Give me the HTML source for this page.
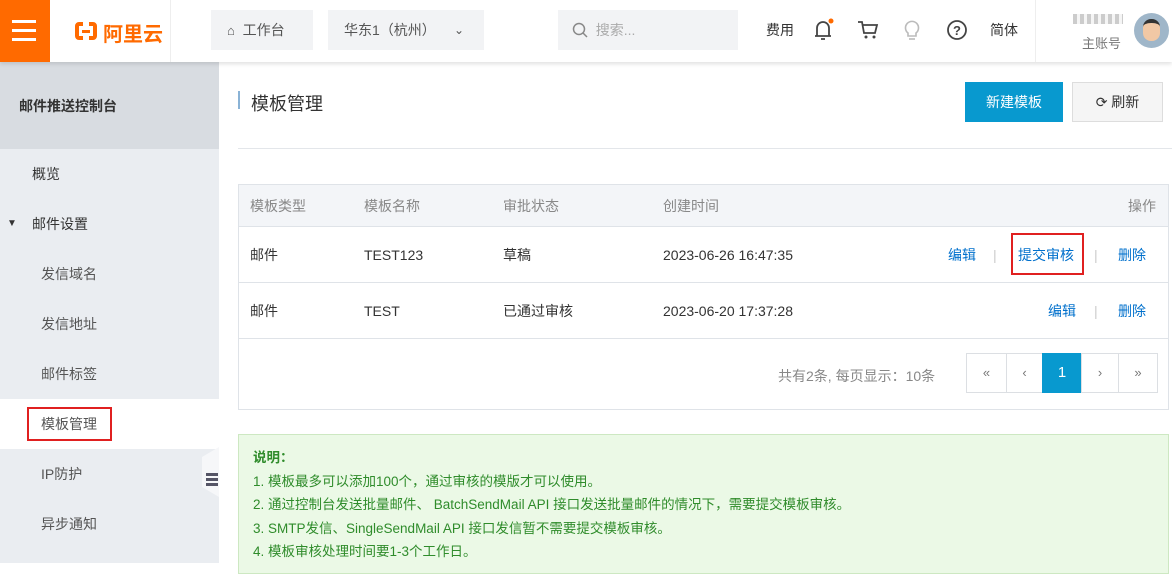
<!DOCTYPE html>
<html><head><meta charset="utf-8"><style>
*{margin:0;padding:0;box-sizing:border-box}
body{width:1172px;height:563px;overflow:hidden;background:#fff;font-family:"Liberation Sans","Noto Sans CJK SC",sans-serif;font-size:14px;color:#333;position:relative}
.a{position:absolute}
.top{left:0;top:0;width:1172px;height:62px;background:#fff;box-shadow:0 2px 4px rgba(0,0,0,.12);z-index:5}
.btn{background:#f2f3f5;height:40px;top:10px;color:#555;font-size:14px;line-height:40px}
.side{left:0;top:62px;width:219px;height:501px;background:#eaedf1}
.si{left:0;width:219px;height:50px;line-height:50px;font-size:14px;color:#333}
.tbl{left:238px;top:184px;width:931px;height:226px;border:1px solid #dfe3e8}
.row{left:0;width:929px;border-bottom:1px solid #dfe3e8}
.c{top:0;height:100%;display:flex;align-items:center;font-size:14px}
.lk{color:#0070cc}
.sep{color:#ccc}
.pg{top:353px;height:40px;border:1px solid #dcdfe3;width:54px;text-align:center;line-height:38px;color:#777;font-size:13px}
</style></head><body>
<div class="a top">
  <div class="a" style="left:0;top:0;width:50px;height:62px;background:#ff6a00">
    <div class="a" style="left:12px;top:20px;width:24px;height:3px;background:#fff"></div>
    <div class="a" style="left:12px;top:29px;width:24px;height:3px;background:#fff"></div>
    <div class="a" style="left:12px;top:38px;width:24px;height:3px;background:#fff"></div>
  </div>
  <div class="a" style="left:75px;top:22px;width:22px;height:18px;border:4px solid #ff6a00;border-radius:4px"></div>
  <div class="a" style="left:83px;top:19px;width:6px;height:24px;background:#fff"></div>
  <div class="a" style="left:82px;top:30px;width:8px;height:3px;background:#ff6a00"></div>
  <div class="a" style="left:103px;top:18px;font-size:20px;font-weight:bold;color:#ff6a00">阿里云</div>
  <div class="a" style="left:170px;top:0;width:1px;height:62px;background:#eee"></div>
  <div class="a btn" style="left:211px;width:102px;padding-left:16px"><span style="font-size:13px">⌂</span>&nbsp; 工作台</div>
  <div class="a btn" style="left:328px;width:156px;padding-left:16px">华东1（杭州）<span style="position:absolute;left:126px;font-size:12px">⌄</span></div>
  <div class="a btn" style="left:558px;width:180px;padding-left:14px;color:#aaa"><svg width="16" height="16" style="vertical-align:-3px"><circle cx="7" cy="7" r="5.5" fill="none" stroke="#888" stroke-width="1.5"/><path d="M11 11l4 4" stroke="#888" stroke-width="1.5"/></svg>&nbsp; 搜索...</div>
  <div class="a" style="left:766px;top:20px;color:#333">费用</div>
  <svg class="a" style="left:812px;top:18px" width="22" height="24"><path d="M5 18V10a6 6 0 0 1 12 0v8M3 18h16M9 21h4" fill="none" stroke="#444" stroke-width="1.8"/><circle cx="19" cy="3" r="2.5" fill="#ff6a00"/></svg>
  <svg class="a" style="left:857px;top:20px" width="22" height="20"><path d="M1 2h4l2 11h11l2-8H6" fill="none" stroke="#444" stroke-width="1.8"/><circle cx="9" cy="17" r="1.5" fill="#444"/><circle cx="17" cy="17" r="1.5" fill="#444"/></svg>
  <svg class="a" style="left:903px;top:18px" width="18" height="24"><path d="M5 15a6.5 6.5 0 1 1 8 0v3H5z" fill="none" stroke="#bbb" stroke-width="1.6"/><path d="M6 21h6" stroke="#bbb" stroke-width="1.6"/></svg>
  <svg class="a" style="left:946px;top:19px" width="22" height="22"><circle cx="11" cy="11" r="9" fill="none" stroke="#444" stroke-width="1.8"/><text x="11" y="16" text-anchor="middle" font-size="13" font-weight="bold" fill="#444" font-family="Liberation Sans">?</text></svg>
  <div class="a" style="left:990px;top:20px;color:#333">简体</div>
  <div class="a" style="left:1035px;top:0;width:1px;height:62px;background:#eee"></div>
  <div class="a" style="left:1073px;top:14px;width:50px;height:10px;background:repeating-linear-gradient(90deg,#aaa 0 4px,#eee 4px 7px);opacity:.6"></div>
  <div class="a" style="left:1082px;top:33px;color:#777;font-size:13px">主账号</div>
  <div class="a" style="left:1134px;top:13px;width:35px;height:35px;border-radius:50%;background:#9fb6c9"><div class="a" style="left:9px;top:6px;width:17px;height:22px;border-radius:8px;background:#f1c8a5;border-top:4px solid #333"></div></div>
</div>

<div class="a side">
  <div class="a" style="left:0;top:0;width:219px;height:87px;background:#d8dce1"></div>
  <div class="a" style="left:19px;top:34px;font-weight:bold;font-size:14px">邮件推送控制台</div>
  <div class="a si" style="top:87px;padding-left:32px">概览</div>
  <div class="a si" style="top:137px;padding-left:32px"><span style="position:absolute;left:7px;font-size:10px">▼</span>邮件设置</div>
  <div class="a si" style="top:187px;padding-left:41px;color:#555">发信域名</div>
  <div class="a si" style="top:237px;padding-left:41px;color:#555">发信地址</div>
  <div class="a si" style="top:287px;padding-left:41px;color:#555">邮件标签</div>
  <div class="a si" style="top:337px;background:#fff;padding-left:41px;color:#555"></div>
  <div class="a" style="left:27px;top:345px;width:85px;height:34px;border:2px solid #e02020;padding-left:12px;line-height:30px;color:#555">模板管理</div>
  <div class="a si" style="top:387px;padding-left:41px;color:#555">IP防护</div>
  <div class="a si" style="top:437px;padding-left:41px;color:#555">异步通知</div>
  <div class="a" style="left:202px;top:385px;width:17px;height:50px;background:#f6f7f9;clip-path:polygon(0 20%,100% 0,100% 100%,0 80%)"></div>
  <div class="a" style="left:206px;top:411px;width:12px;height:3px;background:#556;box-shadow:0 5px 0 #556,0 10px 0 #556"></div>
</div>

<div class="a" style="left:238px;top:91px;width:2px;height:18px;background:#8ab3d6"></div>
<div class="a" style="left:251px;top:90px;font-size:18px;color:#333">模板管理</div>
<div class="a" style="left:965px;top:82px;width:98px;height:40px;background:#0899cf;color:#fff;text-align:center;line-height:40px">新建模板</div>
<div class="a" style="left:1072px;top:82px;width:91px;height:40px;background:#f5f5f5;border:1px solid #ddd;text-align:center;line-height:38px">⟳ 刷新</div>
<div class="a" style="left:238px;top:148px;width:934px;height:1px;background:#e3e6ea"></div>

<div class="a tbl">
  <div class="a row" style="top:0;height:42px;background:#f3f5f8">
    <div class="a c" style="left:11px;color:#888">模板类型</div>
    <div class="a c" style="left:125px;color:#888">模板名称</div>
    <div class="a c" style="left:264px;color:#888">审批状态</div>
    <div class="a c" style="left:424px;color:#888">创建时间</div>
    <div class="a c" style="left:889px;color:#888">操作</div>
  </div>
  <div class="a row" style="top:42px;height:56px">
    <div class="a c" style="left:11px">邮件</div>
    <div class="a c" style="left:125px">TEST123</div>
    <div class="a c" style="left:264px">草稿</div>
    <div class="a c" style="left:424px">2023-06-26 16:47:35</div>
    <div class="a c lk" style="left:709px">编辑</div>
    <div class="a c sep" style="left:754px">|</div>
    <div class="a" style="left:772px;top:6px;width:73px;height:42px;border:2px solid #e02020"></div>
    <div class="a c lk" style="left:779px">提交审核</div>
    <div class="a c sep" style="left:855px">|</div>
    <div class="a c lk" style="left:879px">删除</div>
  </div>
  <div class="a row" style="top:98px;height:56px">
    <div class="a c" style="left:11px">邮件</div>
    <div class="a c" style="left:125px">TEST</div>
    <div class="a c" style="left:264px">已通过审核</div>
    <div class="a c" style="left:424px">2023-06-20 17:37:28</div>
    <div class="a c lk" style="left:809px">编辑</div>
    <div class="a c sep" style="left:855px">|</div>
    <div class="a c lk" style="left:879px">删除</div>
  </div>
</div>
<div class="a" style="left:778px;top:366px;color:#888">共有2条, 每页显示：10条</div>
<div class="a pg" style="left:966px;width:41px">«</div>
<div class="a pg" style="left:1006px;width:37px">‹</div>
<div class="a pg" style="left:1042px;width:40px;background:#0899cf;border-color:#0899cf;color:#fff;font-size:15px">1</div>
<div class="a pg" style="left:1081px;width:38px">›</div>
<div class="a pg" style="left:1118px;width:40px">»</div>

<div class="a" style="left:238px;top:434px;width:931px;height:140px;background:#ebf9e6;border:1px solid #cde8c2;padding:11px 0 0 14px;color:#2f8c2b;font-size:13.5px;line-height:23.5px">
<b>说明：</b><br>1. 模板最多可以添加100个，通过审核的模版才可以使用。<br>2. 通过控制台发送批量邮件、 BatchSendMail API 接口发送批量邮件的情况下，需要提交模板审核。<br>3. SMTP发信、SingleSendMail API 接口发信暂不需要提交模板审核。<br>4. 模板审核处理时间要1-3个工作日。
</div>
</body></html>
